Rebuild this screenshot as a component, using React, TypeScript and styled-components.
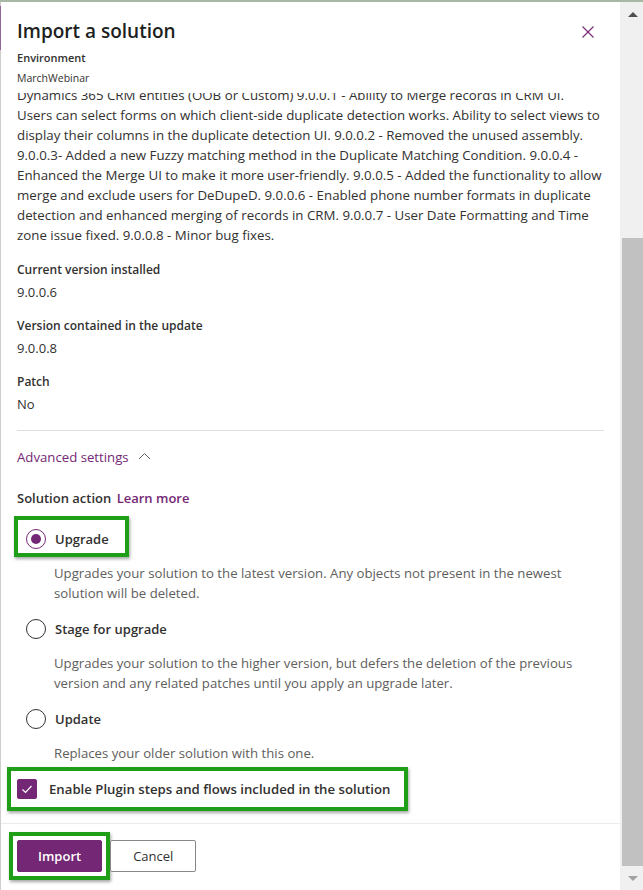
import React, { useState } from "react";
import styled, { createGlobalStyle } from "styled-components";

const PURPLE = "#742774";
const TEXT = "#323130";

const GlobalStyle = createGlobalStyle`
  html, body {
    margin: 0;
    padding: 0;
    background: #ffffff;
  }
  body {
    font-family: "Open Sans", "Noto Sans", sans-serif;
    color: ${TEXT};
  }
`;

const options = [
  {
    key: "upgrade",
    label: "Upgrade",
    description:
      "Upgrades your solution to the latest version. Any objects not present in the newest solution will be deleted.",
  },
  {
    key: "stage",
    label: "Stage for upgrade",
    description:
      "Upgrades your solution to the higher version, but defers the deletion of the previous version and any related patches until you apply an upgrade later.",
  },
  {
    key: "update",
    label: "Update",
    description: "Replaces your older solution with this one.",
  },
];

const fields = [
  { label: "Current version installed", value: "9.0.0.6" },
  { label: "Version contained in the update", value: "9.0.0.8" },
  { label: "Patch", value: "No" },
];

const App: React.FC = () => {
  const [action, setAction] = useState("upgrade");
  const [enablePlugins, setEnablePlugins] = useState(true);

  return (
    <>
      <GlobalStyle />
      <Frame>
        <TopRule />
        <Row>
          <Panel>
            <Header>
              <TitleRow>
                <Title>Import a solution</Title>
                <CloseButton aria-label="Close">
                  <svg width="12" height="12" viewBox="0 0 12 12">
                    <line x1="0.5" y1="0.5" x2="11.5" y2="11.5" stroke={PURPLE} strokeWidth="1.1" />
                    <line x1="11.5" y1="0.5" x2="0.5" y2="11.5" stroke={PURPLE} strokeWidth="1.1" />
                  </svg>
                </CloseButton>
              </TitleRow>
              <EnvLabel>Environment</EnvLabel>
              <EnvValue>MarchWebinar</EnvValue>
            </Header>

            <Body>
              <Description>
                Dynamics 365 CRM entities (OOB or Custom) 9.0.0.1 - Ability to Merge records in CRM UI.
                <br />
                Users can select forms on which client-side duplicate detection works. Ability to select
                views to display their columns in the duplicate detection UI. 9.0.0.2 - Removed the
                unused assembly. 9.0.0.3- Added a new Fuzzy matching method in the Duplicate Matching
                Condition. 9.0.0.4 - Enhanced the Merge UI to make it more user-friendly. 9.0.0.5 - Added
                the functionality to allow merge and exclude users for DeDupeD. 9.0.0.6 - Enabled phone
                number formats in duplicate detection and enhanced merging of records in CRM. 9.0.0.7 -
                User Date Formatting and Time zone issue fixed. 9.0.0.8 - Minor bug fixes.
              </Description>

              <Fields>
                {fields.map((f) => (
                  <Field key={f.label}>
                    <FieldLabel>{f.label}</FieldLabel>
                    <FieldValue>{f.value}</FieldValue>
                  </Field>
                ))}
              </Fields>

              <Divider />

              <AdvancedToggle>
                Advanced settings
                <svg width="13" height="8" viewBox="0 0 13 8">
                  <polyline points="1,7 6.5,1.5 12,7" fill="none" stroke="#605e5c" strokeWidth="1" />
                </svg>
              </AdvancedToggle>

              <SectionTitle>
                Solution action <LearnMore href="#">Learn more</LearnMore>
              </SectionTitle>

              <RadioGroup>
                {options.map((o) => {
                  const row = (
                    <RadioRow onClick={() => setAction(o.key)}>
                      <RadioCircle $checked={action === o.key} />
                      <OptionLabel>{o.label}</OptionLabel>
                    </RadioRow>
                  );
                  return (
                    <Option key={o.key}>
                      {o.key === "upgrade" ? (
                        <Highlight $t={9} $r={16} $b={4} $l={8}>
                          {row}
                        </Highlight>
                      ) : (
                        row
                      )}
                      <OptionText>{o.description}</OptionText>
                    </Option>
                  );
                })}
              </RadioGroup>

              <CheckWrap>
                <Highlight $t={8} $r={14} $b={8} $l={6}>
                  <CheckRow onClick={() => setEnablePlugins(!enablePlugins)}>
                    <CheckBox $checked={enablePlugins}>
                      {enablePlugins && (
                        <svg width="20" height="20" viewBox="0 0 20 20">
                          <polyline
                            points="5.5,10.5 8.5,13.5 14.5,7"
                            fill="none"
                            stroke="#ffffff"
                            strokeWidth="1.2"
                          />
                        </svg>
                      )}
                    </CheckBox>
                    <CheckLabel>Enable Plugin steps and flows included in the solution</CheckLabel>
                  </CheckRow>
                </Highlight>
              </CheckWrap>
            </Body>

            <Footer>
              <Highlight $t={4} $r={4} $b={4} $l={4}>
                <PrimaryButton>Import</PrimaryButton>
              </Highlight>
              <DefaultButton>Cancel</DefaultButton>
            </Footer>
          </Panel>

          <ScrollTrack>
            <ArrowUp />
            <Thumb />
            <ArrowDown />
          </ScrollTrack>
        </Row>
      </Frame>
    </>
  );
};

const Frame = styled.div`
  width: 643px;
  height: 890px;
  display: flex;
  flex-direction: column;
  background: #ffffff;
  overflow: hidden;
`;

const TopRule = styled.div`
  height: 2px;
  flex-shrink: 0;
  background: #a7b9a4;
`;

const Row = styled.div`
  flex: 1;
  min-height: 0;
  display: flex;
`;

const Panel = styled.div`
  position: relative;
  width: 620px;
  flex-shrink: 0;
  display: flex;
  flex-direction: column;
  border-left: 1px solid #cfcdcb;
  box-sizing: border-box;

  &::before {
    content: "";
    position: absolute;
    left: -1px;
    top: 4px;
    width: 1px;
    height: 44px;
    background: #93669a;
  }
`;

const Header = styled.div`
  padding: 15px 26px 7px 16px;
  flex-shrink: 0;
`;

const TitleRow = styled.div`
  display: flex;
  align-items: center;
  justify-content: space-between;
  height: 28px;
`;

const Title = styled.h1`
  margin: 0;
  font-size: 19px;
  font-weight: 600;
  color: #201f1e;
  line-height: 28px;
`;

const CloseButton = styled.button`
  border: none;
  background: none;
  padding: 0;
  width: 12px;
  height: 12px;
  display: flex;
  margin-top: 2px;
  cursor: pointer;
`;

const EnvLabel = styled.div`
  margin-top: 5px;
  font-size: 11px;
  font-weight: 600;
  line-height: 16px;
`;

const EnvValue = styled.div`
  margin-top: 4px;
  font-size: 10.5px;
  line-height: 16px;
`;

const Body = styled.div`
  flex: 1;
  min-height: 0;
  overflow: hidden;
  padding: 0 15px 0 16px;
`;

const Description = styled.p`
  margin: -8px 0 0;
  font-size: 13.3px;
  line-height: 20px;
  color: ${TEXT};
`;

const Fields = styled.div`
  margin-top: 15px;
  display: flex;
  flex-direction: column;
  gap: 14px;
`;

const Field = styled.div`
  display: flex;
  flex-direction: column;
  gap: 2px;
`;

const FieldLabel = styled.div`
  font-size: 12px;
  font-weight: 600;
  line-height: 20px;
`;

const FieldValue = styled.div`
  font-size: 13px;
  line-height: 20px;
`;

const Divider = styled.hr`
  margin: 16px 1px 0 0;
  border: none;
  border-top: 1px solid #e1dfdd;
`;

const AdvancedToggle = styled.div`
  margin-top: 16px;
  display: flex;
  align-items: center;
  gap: 9px;
  color: ${PURPLE};
  font-size: 13.2px;
  line-height: 20px;
  cursor: pointer;

  svg {
    margin-top: -2px;
  }
`;

const SectionTitle = styled.div`
  margin-top: 21px;
  font-size: 13px;
  font-weight: 600;
  line-height: 20px;
`;

const LearnMore = styled.a`
  color: ${PURPLE};
  text-decoration: none;
  margin-left: 2px;
`;

const RadioGroup = styled.div`
  display: flex;
  flex-direction: column;
  padding-left: 9px;
`;

const Option = styled.div`
  margin-top: 16px;
  display: flex;
  flex-direction: column;

  &:first-child {
    margin-top: 21px;
  }
`;

const RadioRow = styled.div`
  display: flex;
  align-items: center;
  gap: 9px;
  height: 20px;
  cursor: pointer;
`;

const RadioCircle = styled.span<{ $checked: boolean }>`
  position: relative;
  width: 20px;
  height: 20px;
  box-sizing: border-box;
  border-radius: 50%;
  border: 1px solid ${(p) => (p.$checked ? PURPLE : TEXT)};

  &::after {
    content: "";
    display: ${(p) => (p.$checked ? "block" : "none")};
    position: absolute;
    left: 4px;
    top: 4px;
    width: 10px;
    height: 10px;
    border-radius: 50%;
    background: ${PURPLE};
  }
`;

const OptionLabel = styled.span`
  font-size: 13px;
  font-weight: 600;
  line-height: 20px;
`;

const OptionText = styled.div`
  margin-top: 14px;
  padding-left: 28px;
  font-size: 13.2px;
  line-height: 20px;
  color: #605e5c;
`;

const Highlight = styled.div<{ $t: number; $r: number; $b: number; $l: number }>`
  display: flex;
  width: fit-content;
  border: 4px solid #1f9e17;
  box-shadow: 1px 2px 3px rgba(0, 0, 0, 0.35);
  padding: ${(p) => `${p.$t}px ${p.$r}px ${p.$b}px ${p.$l}px`};
  margin: ${(p) => `-${p.$t + 4}px -${p.$r + 4}px -${p.$b + 4}px -${p.$l + 4}px`};
  background: #ffffff;
`;

const CheckWrap = styled.div`
  margin-top: 16px;
`;

const CheckRow = styled.div`
  display: flex;
  align-items: center;
  gap: 12px;
  height: 20px;
  cursor: pointer;
`;

const CheckBox = styled.span<{ $checked: boolean }>`
  width: 20px;
  height: 20px;
  box-sizing: border-box;
  border-radius: 2px;
  display: flex;
  background: ${(p) => (p.$checked ? PURPLE : "#ffffff")};
  border: 1px solid ${(p) => (p.$checked ? PURPLE : TEXT)};

  svg {
    margin: -1px;
  }
`;

const CheckLabel = styled.span`
  font-size: 13.2px;
  font-weight: 600;
  line-height: 20px;
`;

const Footer = styled.div`
  flex-shrink: 0;
  height: 67px;
  box-sizing: border-box;
  border-top: 1px solid #edebe9;
  padding: 16px 16px 0;
  display: flex;
  align-items: flex-start;
  gap: 8px;
`;

const BaseButton = styled.button`
  height: 32px;
  min-width: 80px;
  padding: 0 20px;
  border-radius: 2px;
  font-family: "Open Sans", "Noto Sans", sans-serif;
  font-size: 13px;
  font-weight: 600;
  cursor: pointer;
`;

const PrimaryButton = styled(BaseButton)`
  background: ${PURPLE};
  border: 1px solid ${PURPLE};
  color: #ffffff;
`;

const DefaultButton = styled(BaseButton)`
  background: #ffffff;
  border: 1px solid #8a8886;
  color: ${TEXT};
  font-weight: 400;
  padding: 0 22px;
`;

const ScrollTrack = styled.div`
  flex: 1;
  display: flex;
  flex-direction: column;
  align-items: flex-end;
  background: #f0f0f0;
`;

const ArrowUp = styled.div`
  width: 21px;
  height: 24px;
  display: flex;
  justify-content: center;
  align-items: center;

  &::before {
    content: "";
    border-left: 5px solid transparent;
    border-right: 5px solid transparent;
    border-bottom: 5px solid #505050;
  }
`;

const Thumb = styled.div`
  width: 21px;
  height: 628px;
  margin-top: 212px;
  background: #c1c1c1;
`;

const ArrowDown = styled.div`
  width: 21px;
  flex: 1;
  display: flex;
  justify-content: center;
  align-items: center;

  &::before {
    content: "";
    border-left: 5px solid transparent;
    border-right: 5px solid transparent;
    border-top: 5px solid #a3a3a3;
  }
`;

export default App;
